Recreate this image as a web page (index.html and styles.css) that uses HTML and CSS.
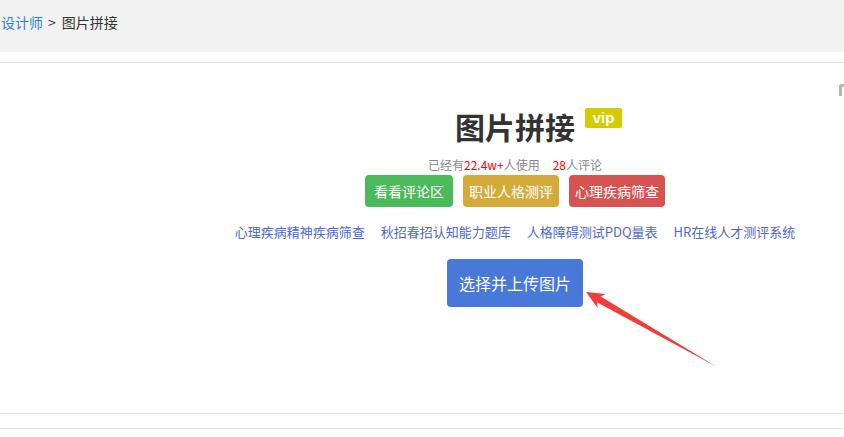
FILE: index.html
```html
<!DOCTYPE html>
<html lang="zh-CN">
<head>
    <meta charset="UTF-8">
    <meta name="viewport" content="width=device-width, initial-scale=1.0">
    <title>图片拼接</title>
    <link rel="stylesheet" href="styles.css">
</head>
<body>
    <div class="crumb-bar">
        <div class="crumb"><a href="#">设计师</a><span class="sep">&gt;</span>图片拼接</div>
    </div>

    <div class="tool">
        <div class="tool-inner">
            <h1 class="title"><span class="title-text">图片拼接<span class="vip">vip</span></span></h1>
            <div class="stats">已经有<em>22.4w+</em>人使用<span class="gap"></span><em>28</em>人评论</div>
            <div class="actions">
                <a class="btn btn-green" href="#">看看评论区</a>
                <a class="btn btn-gold" href="#">职业人格测评</a>
                <a class="btn btn-red" href="#">心理疾病筛查</a>
            </div>
            <div class="links">
                <a href="#">心理疾病精神疾病筛查</a>
                <a href="#">秋招春招认知能力题库</a>
                <a href="#">人格障碍测试PDQ量表</a>
                <a href="#">HR在线人才测评系统</a>
            </div>
            <div class="upload-row">
                <button class="upload">选择并上传图片</button>
            </div>
        </div>
        <span class="side-icon"></span>
        <svg class="arrow" width="844" height="437" viewBox="0 0 844 437">
            <polygon points="586,292 605.6,294 600.7,296.5 717,367 597.3,302.5 597.6,308" fill="#f23b3b"/>
        </svg>
    </div>
    <div class="foot-line"></div>
</body>
</html>
```

FILE: styles.css
```css
body {
    margin: 0;
    font-family: "Noto Sans CJK SC", "Noto Sans", sans-serif;
    color: #333;
    background: #fff;
    overflow: hidden;
}
a {
    text-decoration: none;
}
.crumb-bar {
    height: 52px;
    background: #f2f2f2;
    margin-bottom: 10px;
}
.crumb {
    font-size: 14px;
    line-height: 44px;
    padding-left: 1px;
    color: #333;
}
.crumb a {
    color: #2d82d4;
}
.crumb .sep {
    margin: 0 6px 0 5px;
}
.tool {
    position: relative;
    border-top: 1px solid #e0e0e0;
    border-bottom: 1px solid #e0e0e0;
    height: 350px;
}
.tool-inner {
    padding: 43px 0 0 186px;
    text-align: center;
}
.title {
    margin: 0;
    font-size: 30px;
    line-height: 40px;
    font-weight: bold;
    color: #333;
}
.title-text {
    position: relative;
}
.vip {
    position: absolute;
    left: 100%;
    top: 4px;
    margin-left: 10px;
    width: 37px;
    height: 20px;
    line-height: 20px;
    font-size: 15px;
    font-weight: bold;
    color: #fff;
    background: #d5cb00;
    border-radius: 2px;
    font-family: "Liberation Sans", sans-serif;
}
.stats {
    margin-top: 10px;
    font-size: 12px;
    line-height: 18px;
    color: #888;
}
.stats em {
    font-style: normal;
    color: #f00;
}
.stats .gap {
    display: inline-block;
    width: 13px;
}
.actions {
    display: flex;
    justify-content: center;
    gap: 10px;
    margin-top: 1px;
}
.btn {
    display: block;
    width: 96px;
    height: 32px;
    line-height: 32px;
    font-size: 14px;
    text-align: center;
    color: #fff;
    border-radius: 4px;
}
.btn-green {
    width: 88px;
    background: #4cba5a;
}
.btn-gold {
    background: #d4ab3b;
}
.btn-red {
    background: #d75351;
}
.links {
    display: flex;
    justify-content: center;
    gap: 16px;
    margin-top: 15px;
    font-size: 13px;
    line-height: 20px;
}
.links a {
    color: #4c68d6;
}
.upload-row {
    margin-top: 17px;
}
.upload {
    height: 48px;
    padding: 0 12px;
    font-family: inherit;
    font-size: 16px;
    color: #fff;
    background: #4878d8;
    border: none;
    border-radius: 4px;
    cursor: pointer;
}
.side-icon {
    position: absolute;
    right: 0;
    top: 21px;
    width: 5px;
    height: 12px;
    border-top: 3px solid #b5b5b5;
    border-left: 3px solid #b5b5b5;
    border-radius: 3px 0 0 0;
    box-sizing: border-box;
}
.arrow {
    position: absolute;
    left: 0;
    top: -63px;
    pointer-events: none;
}
.foot-line {
    margin-top: 14px;
    border-top: 1px solid #e0e0e0;
}
```
